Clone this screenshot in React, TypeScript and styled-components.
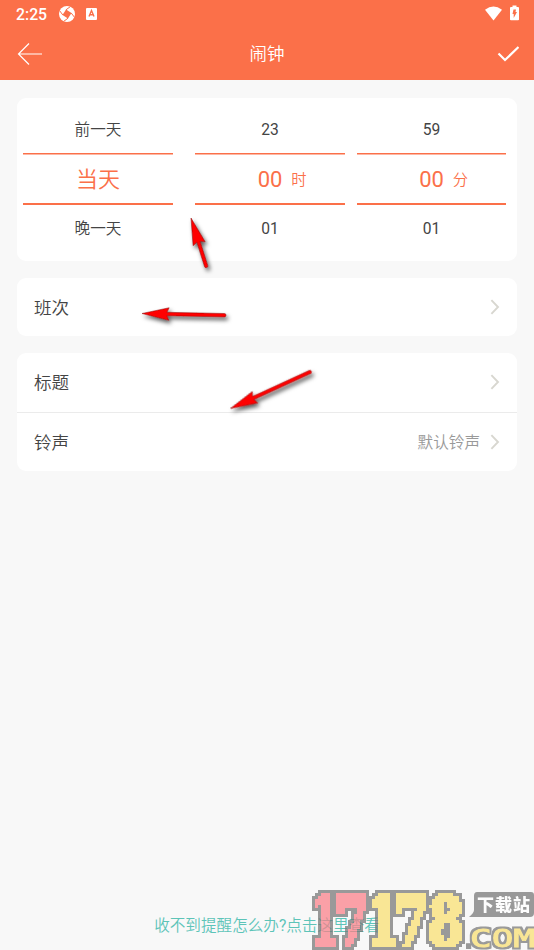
import React from "react";
import styled, { createGlobalStyle } from "styled-components";

const ACCENT = "#fb7049";

const GlobalStyle = createGlobalStyle`
  * { box-sizing: border-box; }
  body {
    margin: 0;
    background: #f8f8f8;
    font-family: Roboto, "Noto Sans CJK SC DemiLight", "Noto Sans CJK SC Light", "Noto Sans CJK SC", sans-serif;
    color: #444;
  }
`;

const Screen = styled.div`
  position: relative;
  display: flex;
  flex-direction: column;
  width: 534px;
  height: 950px;
  overflow: hidden;
  background: #f8f8f8;
`;

const Header = styled.header`
  flex: none;
  height: 80px;
  background: ${ACCENT};
  color: #fff;
`;

const StatusBar = styled.div`
  display: flex;
  align-items: center;
  height: 27px;
  padding: 0 15px 0 16px;
`;

const Clock = styled.span`
  width: 43px;
  padding-top: 1px;
  font-size: 15.8px;
  font-weight: 500;
  line-height: 27px;
`;

const StatusIcons = styled.div<{ $end?: boolean }>`
  display: flex;
  align-items: center;
  gap: ${(p) => (p.$end ? "8px" : "10px")};
  margin-left: ${(p) => (p.$end ? "auto" : "0")};
`;

const TitleBar = styled.div`
  display: grid;
  grid-template-columns: 40px 1fr 40px;
  align-items: center;
  height: 53px;
  padding: 0 15px 0 17px;
`;

const Title = styled.h1`
  margin: 0;
  padding-right: 2px;
  font-size: 17.5px;
  font-weight: 400;
  line-height: 26px;
  text-align: center;
`;

const IconButton = styled.button<{ $right?: boolean }>`
  display: flex;
  justify-content: ${(p) => (p.$right ? "flex-end" : "flex-start")};
  padding: 0;
  border: 0;
  background: none;
  color: inherit;
`;

const Content = styled.main`
  display: flex;
  flex-direction: column;
  gap: 17px;
  padding: 18px 17px 0;
`;

const Card = styled.section`
  border-radius: 9px;
  background: #fff;
  overflow: hidden;
`;

const Picker = styled(Card)`
  display: grid;
  grid-template-columns: 150px 22px 150px 12px 149px;
  height: 163px;
  padding: 6px 0 0 6px;
`;

const Wheel = styled.div<{ $column: number }>`
  grid-column: ${(p) => p.$column};
  display: grid;
  grid-template-rows: 49px 52px 48px;
`;

const Option = styled.div<{ $after?: boolean }>`
  padding-top: ${(p) => (p.$after ? 0 : 3)}px;
  font-size: 15.6px;
  line-height: ${(p) => (p.$after ? 48 : 46)}px;
  text-align: center;
  color: #444;
`;

const Selected = styled.div`
  display: grid;
  grid-template-columns: 1fr auto 1fr;
  align-items: center;
  border-top: 1px solid ${ACCENT};
  border-bottom: 2px solid ${ACCENT};
  box-shadow: inset 0 1px rgba(251, 112, 73, 0.5);
  color: ${ACCENT};
  font-size: 22px;
  line-height: 46px;
`;

const Unit = styled.span`
  grid-column: 3;
  padding: 2px 0 0 9px;
  font-size: 15.3px;
`;

const SelectedValue = styled.span`
  grid-column: 2;
  padding-top: 3px;
`;

const Row = styled.div`
  display: flex;
  align-items: center;
  height: 58px;
  padding: 0 16px 0 17px;

  & + & {
    height: 59px;
    margin-top: 1px;
    border-top: 1px solid #ebebeb;
  }
`;

const RowLabel = styled.span`
  flex: 1;
  padding-top: 2px;
  font-size: 17.6px;
  line-height: 26px;
`;

const RowValue = styled.span`
  margin-right: 9px;
  padding-top: 2px;
  font-size: 15.6px;
  line-height: 24px;
  color: #999;
`;

const HelpLink = styled.div`
  margin-top: auto;
  padding-bottom: 12px;
  text-align: center;
  font-size: 15.6px;
  line-height: 24px;
  color: #5dc4b8;
`;

const Overlay = styled.svg`
  position: absolute;
  inset: 0;
  pointer-events: none;
`;

const Chevron = () => (
  <svg width="12" height="18" viewBox="0 0 12 18" fill="none">
    <path d="M2.400 2.200 9 9l-6.600 6.800" stroke="#d8d7d0" strokeWidth="1.900" />
  </svg>
);

const Wheels = [
  { before: "前一天", value: "当天", unit: "", after: "晚一天", column: 1 },
  { before: "23", value: "00", unit: "时", after: "01", column: 3 },
  { before: "59", value: "00", unit: "分", after: "01", column: 5 },
];

const PickerCard = () => (
  <Picker>
    {Wheels.map((w) => (
      <Wheel key={w.column} $column={w.column}>
        <Option>{w.before}</Option>
        <Selected>
          <SelectedValue>{w.value}</SelectedValue>
          {w.unit && <Unit>{w.unit}</Unit>}
        </Selected>
        <Option $after>{w.after}</Option>
      </Wheel>
    ))}
  </Picker>
);

/* Each arrow points right-to-left from its tip and is turned to its direction. */
const arrows = [
  { x: 191, y: 218, angle: 72.5, length: 52 },
  { x: 142, y: 313.5, angle: 1.2, length: 84 },
  { x: 230.5, y: 408.5, angle: -24.7, length: 89 },
];

const Arrows = () => (
  <Overlay width="534" height="950">
    <defs>
      <filter id="shade" filterUnits="userSpaceOnUse" x="130" y="205" width="200" height="220">
        <feDropShadow dx="2" dy="3" stdDeviation="2" floodColor="#000" floodOpacity="0.65" />
      </filter>
    </defs>
    <g filter="url(#shade)">
      {arrows.map((a) => (
        <g key={a.y} transform={`translate(${a.x} ${a.y}) rotate(${a.angle})`}>
          <path
            d={`M0 0 27-6.300 25-1.700H${a.length - 1.5}q1.500 0 1.500 1.700t-1.500 1.700H25L27 6.300Z`}
            fill="#fe0000"
            stroke="#8c1717"
            strokeWidth="0.5"
          />
        </g>
      ))}
    </g>
  </Overlay>
);

const PINK = "#fb7f88";
const YELLOW = "#fae070";
const GREY = "#757575";

const digits = [
  { text: "1", x: 310, width: 30, fill: PINK },
  { text: "7", x: 335, width: 35, fill: PINK },
  { text: "1", x: 368, width: 30, fill: YELLOW },
  { text: "7", x: 394, width: 35, fill: YELLOW },
  { text: "8", x: 428, width: 36, fill: YELLOW },
];

/* The filters turn the lettering into 3px blocks and put a grey rim round them. */
const Watermark = () => (
  <Overlay width="534" height="950" opacity="0.72">
    <defs>
      <filter id="blocks" filterUnits="userSpaceOnUse" x="306" y="884" width="234" height="72" colorInterpolationFilters="sRGB">
        <feFlood x="307" y="885" width="1" height="1" floodColor="#000" />
        <feComposite in2="SourceGraphic" operator="over" x="306" y="884" width="3" height="3" />
        <feTile result="grid" />
        <feComponentTransfer in="SourceGraphic" result="solid">
          <feFuncA type="discrete" tableValues="0 1" />
        </feComponentTransfer>
        <feComposite in="solid" in2="grid" operator="in" />
        <feMorphology operator="dilate" radius="1" result="letters" />
        <feMorphology in="letters" operator="dilate" radius="3" result="wide" />
        <feFlood floodColor={GREY} />
        <feComposite in2="wide" operator="in" result="rim" />
        <feMerge>
          <feMergeNode in="rim" />
          <feMergeNode in="letters" />
        </feMerge>
      </filter>
      <filter id="rim" filterUnits="userSpaceOnUse" x="460" y="918" width="80" height="38" colorInterpolationFilters="sRGB">
        <feMorphology in="SourceAlpha" operator="dilate" radius="2" result="wide" />
        <feFlood floodColor={GREY} />
        <feComposite in2="wide" operator="in" result="edge" />
        <feMerge>
          <feMergeNode in="edge" />
          <feMergeNode in="SourceGraphic" />
        </feMerge>
      </filter>
    </defs>
    <g fontFamily="DejaVu Serif" fontWeight="700" fontSize="67" strokeWidth="4" filter="url(#blocks)">
      {digits.map((d) => (
        <text
          key={d.x}
          x={d.x}
          y="944.500"
          textLength={d.width}
          lengthAdjust="spacingAndGlyphs"
          fill={d.fill}
          stroke={d.fill}
        >
          {d.text}
        </text>
      ))}
    </g>
    <text x="459" y="949" fontFamily="DejaVu Sans Mono" fontWeight="700" fontSize="32" fill={GREY}>
      .
    </text>
    <text
      x="470"
      y="947"
      fontFamily="DejaVu Sans Mono"
      fontWeight="400"
      fontSize="25"
      textLength="65"
      lengthAdjust="spacingAndGlyphs"
      fill={YELLOW}
      stroke={YELLOW}
      strokeWidth="0.9"
      filter="url(#rim)"
    >
      COM
    </text>
    <path d="M477 892h54q3 0 3 3v18q0 4-4 4h-61q5-4 5-7v-14q0-4 3-4Z" fill={GREY} />
    <text x="477" y="911" fontFamily="Noto Sans CJK SC" fontWeight="900" fontSize="17" textLength="53" fill="#fff">
      下载站
    </text>
  </Overlay>
);

export default function App() {
  return (
    <Screen>
      <GlobalStyle />
      <Header>
        <StatusBar>
          <Clock>2:25</Clock>
          <StatusIcons>
            <svg width="16" height="16" viewBox="0 0 16 16">
              <circle cx="8" cy="8" r="8" fill="#fff" />
              <path d="m7 3.500 5.500 3.500-3.500 5.500L3.500 9Z" fill={ACCENT} />
              <path d="M7 3.800 11.500.5M12.200 7l3.500 4.500M9 12.200 4.500 15.500M3.800 9 .5 4.500" stroke={ACCENT} strokeWidth="1" />
            </svg>
            <svg width="13" height="13" viewBox="0 0 13 13">
              <rect x="1" y="1" width="11" height="12" rx="1" fill="#fff" />
              <path d="m4 9.500 2.500-6L9 9.500M5 7.700h3" fill="none" stroke={ACCENT} strokeWidth="1.400" />
            </svg>
          </StatusIcons>
          <StatusIcons $end>
            <svg width="17" height="15" viewBox="0 0 17 15">
              <path d="M0 3.700Q8.500-2.500 17 3.700L8.500 14.500Z" fill="#fff" />
            </svg>
            <svg width="9" height="17" viewBox="0 0 9 17">
              <path d="M1 2h1.500V.5h4V2H8q1 0 1 1v11.500q0 .8-1 .8H1q-1 0-1-.8V3q0-1 1-1Z" fill="#fff" />
              <path d="M3.500 4.500H6L5.500 7H7l-3.300 6V9H2.500Z" fill={ACCENT} />
            </svg>
          </StatusIcons>
        </StatusBar>
        <TitleBar>
          <IconButton aria-label="返回">
            <svg width="26" height="24" viewBox="0 0 26 24" fill="none" stroke="#fff" strokeWidth="1.200">
              <path d="M12 1.500 1.500 12 12 22.500M1.500 12H25" />
            </svg>
          </IconButton>
          <Title>闹钟</Title>
          <IconButton $right aria-label="确定">
            <svg width="22" height="18" viewBox="0 0 22 18" fill="none" stroke="#fff" strokeWidth="2.200">
              <path d="m1.500 8.500 6.500 6.500L21.500 2" />
            </svg>
          </IconButton>
        </TitleBar>
      </Header>
      <Content>
        <PickerCard />
        <Card>
          <Row>
            <RowLabel>班次</RowLabel>
            <Chevron />
          </Row>
        </Card>
        <Card>
          <Row>
            <RowLabel>标题</RowLabel>
            <Chevron />
          </Row>
          <Row>
            <RowLabel>铃声</RowLabel>
            <RowValue>默认铃声</RowValue>
            <Chevron />
          </Row>
        </Card>
      </Content>
      <HelpLink>收不到提醒怎么办?点击这里查看</HelpLink>
      <Arrows />
      <Watermark />
    </Screen>
  );
}
